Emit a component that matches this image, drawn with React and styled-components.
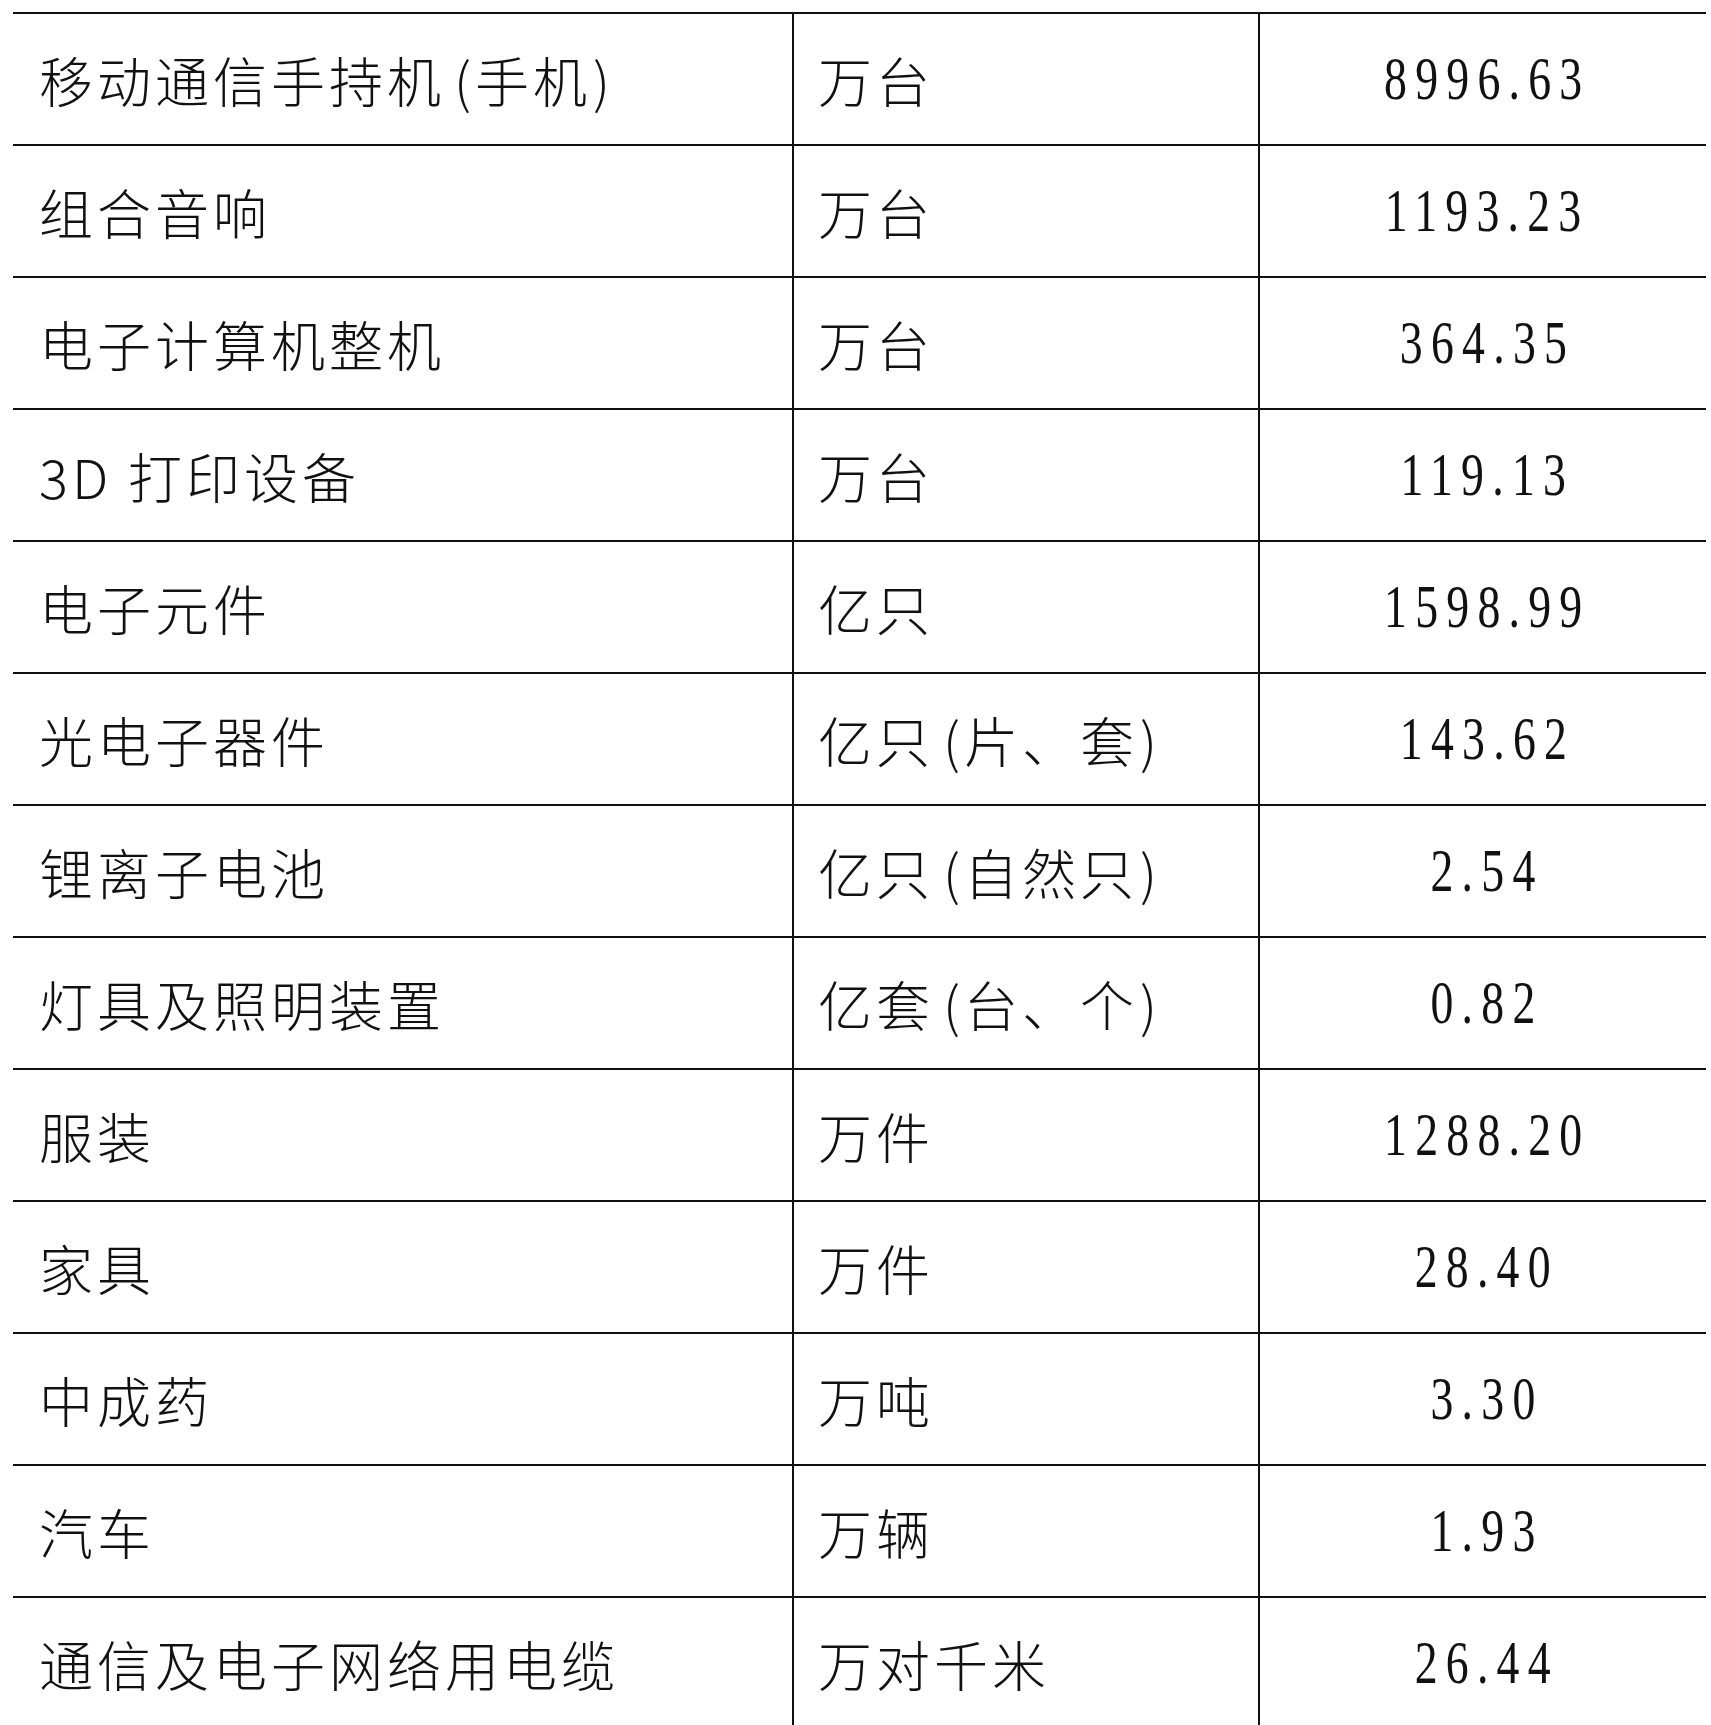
import React from 'react'
import styled, { createGlobalStyle } from 'styled-components'

const GlobalStyle = createGlobalStyle`
  html, body {
    margin: 0;
    padding: 0;
    background: #fff;
    overflow: hidden;
  }
`;

const Table = styled.div`
  display: grid;
  grid-template-columns: 779px 466px 448px;
  grid-auto-rows: 132px;
  margin: 12px 0 0 13px;
  width: 1693px;
  border-top: 2px solid #111;
  font-family: "Noto Sans CJK SC", "Noto Sans", sans-serif;
  font-weight: 300;
  color: #111;
`;

const Cell = styled.div`
  display: flex;
  align-items: center;
  justify-content: ${p => (p.$center ? 'center' : 'flex-start')};
  padding-left: ${p => (p.$center ? '0' : p.$first ? '26px' : '24px')};
  border-bottom: 2px solid #111;
  border-left: ${p => (p.$first ? 'none' : '2px solid #111')};
  font-size: 54px;
  letter-spacing: 4px;
  white-space: nowrap;
  box-sizing: border-box;
`;

// the brackets in the source sit a little apart from their neighbours
const Paren = styled.span`
  margin-left: ${p => (p.$open ? '9px' : '2px')};
`;

const Number = styled.span`
  display: inline-block;
  font-family: "Liberation Serif", "Times New Roman", serif;
  font-weight: 400;
  font-size: 61px;
  letter-spacing: 11px;
  transform: scaleX(0.75);
  padding-left: 11px;
`;

const rows = [
  ['移动通信手持机(手机)', '万台', '8996.63'],
  ['组合音响', '万台', '1193.23'],
  ['电子计算机整机', '万台', '364.35'],
  ['3D 打印设备', '万台', '119.13'],
  ['电子元件', '亿只', '1598.99'],
  ['光电子器件', '亿只(片、套)', '143.62'],
  ['锂离子电池', '亿只(自然只)', '2.54'],
  ['灯具及照明装置', '亿套(台、个)', '0.82'],
  ['服装', '万件', '1288.20'],
  ['家具', '万件', '28.40'],
  ['中成药', '万吨', '3.30'],
  ['汽车', '万辆', '1.93'],
  ['通信及电子网络用电缆', '万对千米', '26.44'],
];

function withParens(text) {
  return text.split(/([()])/).map((part, i) => {
    if (part === '(') return <Paren key={i} $open>(</Paren>;
    if (part === ')') return <Paren key={i}>)</Paren>;
    return part;
  });
}

export default function App() {
  return (
    <>
      <GlobalStyle />
      <Table>
        {rows.map(([name, unit, value]) => (
          <React.Fragment key={name}>
            <Cell $first>{withParens(name)}</Cell>
            <Cell>{withParens(unit)}</Cell>
            <Cell $center><Number>{value}</Number></Cell>
          </React.Fragment>
        ))}
      </Table>
    </>
  );
}
